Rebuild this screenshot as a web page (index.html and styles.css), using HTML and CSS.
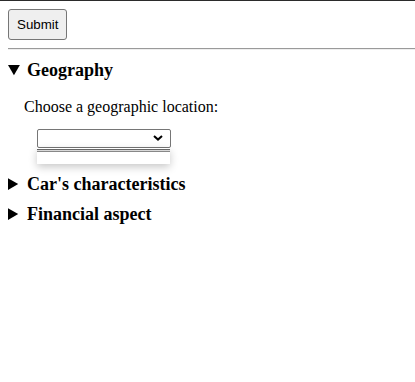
FILE: index.html
```html
<!DOCTYPE html>
<html lang="en">
<head>
    <meta charset="UTF-8">
    <meta name="viewport" content="width=device-width, initial-scale=1.0">
    <title>Car Survey</title>
    <link rel="stylesheet" href="styles.css">
</head>
<body>

    <form class="survey-form">
        <button type="submit" class="submit-button">Submit</button>
    </form>

    <hr class="divider">

    <details class="section" open>
        <summary class="section-title">Geography</summary>
        <div class="section-body">
            <p class="question">Choose a geographic location:</p>
            <div class="select-wrap">
                <select class="location-select" aria-label="Geographic location"></select>
                <svg class="select-arrow" width="10" height="6" viewBox="0 0 10 6" aria-hidden="true">
                    <path d="M1 1 L5 4.6 L9 1" fill="none" stroke="#000" stroke-width="2"/>
                </svg>
                <div class="select-popup" role="listbox">
                    <div class="popup-bar"></div>
                </div>
            </div>
        </div>
    </details>

    <details class="section">
        <summary class="section-title">Car's characteristics</summary>
    </details>

    <details class="section">
        <summary class="section-title">Financial aspect</summary>
    </details>

</body>
</html>
```

FILE: styles.css
```css
html {
    border-top: 1px solid #2b2b2b;
}

body {
    margin: 8px 0 8px 8px;
    font-family: "Liberation Serif", "Times New Roman", serif;
    font-size: 16px;
    color: #000;
    background-color: #fff;
}

.survey-form {
    margin: 0;
}

.submit-button {
    font-family: "Liberation Sans", Arial, sans-serif;
    font-size: 13.33px;
    padding: 7px 8px;
    background-color: #efefef;
    border: 1px solid #767676;
    border-radius: 3px;
    color: #000;
    cursor: pointer;
}

.divider {
    margin: 8px 0 10px 0;
    border: none;
    border-top: 1px solid #9a9a9a;
    border-bottom: 1px solid #eeeeee;
}

.section {
    margin-bottom: 10px;
}

.section-title {
    font-size: 18px;
    font-weight: bold;
    line-height: 20px;
    cursor: pointer;
}

.section-body {
    padding-left: 16px;
    padding-bottom: 16px;
}

.question {
    margin: 18px 0 13px;
}

.select-wrap {
    position: relative;
    margin-left: 13px;
    width: 134px;
}

.location-select {
    display: block;
    width: 134px;
    height: 19px;
    font-family: "Liberation Sans", Arial, sans-serif;
    font-size: 13.33px;
    border: 1px solid #767676;
    border-radius: 2px;
    background-color: #fff;
    appearance: none;
    -webkit-appearance: none;
}

.select-arrow {
    position: absolute;
    top: 6px;
    right: 8px;
    pointer-events: none;
}

.select-popup {
    position: absolute;
    top: 100%;
    left: 0;
    width: 133px;
    height: 16px;
    background-color: #fff;
    box-shadow: 0 3px 8px rgba(0, 0, 0, 0.22);
}

.popup-bar {
    margin-top: 1px;
    height: 1px;
    background-color: #d8d8d8;
    border-top: 1px solid #666;
    border-bottom: 1px solid #888;
}
```
